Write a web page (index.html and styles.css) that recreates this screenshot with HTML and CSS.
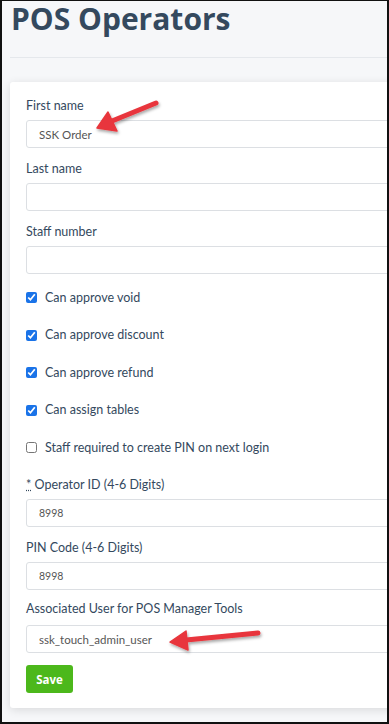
FILE: index.html
```html
<!DOCTYPE html>
<html>
<head>
<meta charset="utf-8">
<link rel="stylesheet" href="styles.css">
</head>
<body>
<div class="frame">
  <h1 class="title">POS Operators</h1>
  <div class="divider"></div>
  <div class="card">
    <div class="field">
      <label class="label">First name</label>
      <input class="input" type="text" value="SSK Order">
    </div>
    <div class="field">
      <label class="label">Last name</label>
      <input class="input" type="text" value="">
    </div>
    <div class="field">
      <label class="label">Staff number</label>
      <input class="input" type="text" value="">
    </div>
    <div class="checks">
      <label class="check"><input type="checkbox" checked><span>Can approve void</span></label>
      <label class="check"><input type="checkbox" checked><span>Can approve discount</span></label>
      <label class="check"><input type="checkbox" checked><span>Can approve refund</span></label>
      <label class="check"><input type="checkbox" checked><span>Can assign tables</span></label>
      <label class="check"><input type="checkbox"><span>Staff required to create PIN on next login</span></label>
    </div>
    <div class="field">
      <label class="label"><abbr class="req" title="required">*</abbr> Operator ID (4-6 Digits)</label>
      <input class="input small" type="text" value="8998">
    </div>
    <div class="field">
      <label class="label">PIN Code (4-6 Digits)</label>
      <input class="input small" type="text" value="8998">
    </div>
    <div class="field assoc">
      <label class="label">Associated User for POS Manager Tools</label>
      <input class="input" type="text" value="ssk_touch_admin_user">
    </div>
    <button class="save" type="button">Save</button>
  </div>
  <svg class="arrows" width="389" height="724" viewBox="0 0 389 724">
    <defs>
      <filter id="sh" x="-20%" y="-20%" width="140%" height="140%">
        <feDropShadow dx="1" dy="2" stdDeviation="1.5" flood-color="#000" flood-opacity="0.35"/>
      </filter>
    </defs>
    <g filter="url(#sh)" fill="#e8363c" stroke="#e8363c" stroke-linecap="round" stroke-linejoin="round">
      <line x1="156" y1="103" x2="112" y2="121" stroke-width="5"/>
      <polygon points="97,128 108,112 117,131" stroke-width="1.5"/>
      <line x1="258" y1="633" x2="186" y2="640" stroke-width="5"/>
      <polygon points="170,642 186,631 188,650" stroke-width="1.5"/>
    </g>
  </svg>
</div>
</body>
</html>
```
FILE: styles.css
```css
* { box-sizing: border-box; }
html, body { margin: 0; padding: 0; }
body { background: #f6f7f9; }
.frame {
  position: relative;
  width: 389px;
  height: 724px;
  overflow: hidden;
  background: #f6f7f9;
  border-top: 1px solid #111;
  border-left: 2px solid #111;
  border-right: 2px solid #111;
  border-bottom: 2px solid #111;
  font-family: "Lato", "Liberation Sans", sans-serif;
  color: #34495e;
}
.title {
  margin: 0 0 0 9px;
  font-family: "Open Sans", sans-serif;
  font-weight: 700;
  font-size: 30px;
  line-height: 36px;
  color: #34495e;
}
.divider {
  margin: 20px 0 0 8px;
  height: 1px;
  background: #e5e8ec;
}
.card {
  margin: 24px 0 0 8px;
  width: 420px;
  background: #fff;
  border-radius: 3px;
  box-shadow: 0 2px 10px rgba(0,0,0,0.12);
  padding: 16px 0 15px 16px;
}
.field { display: flex; flex-direction: column; margin-bottom: 13px; }
.label {
  font-size: 12.5px;
  line-height: 16px;
  margin-bottom: 6px;
  color: #34495e;
}
.field.assoc { margin-top: -2px; }
.field.assoc .label { margin-bottom: 8px; }
.req { text-decoration: underline dotted; cursor: help; }
.input {
  height: 28px;
  width: 100%;
  border: 1px solid #dcdfe3;
  border-radius: 3px;
  padding: 0 12px;
  font-family: "Lato", sans-serif;
  font-size: 11.5px;
  color: #555;
  background: #fff;
  outline: none;
}
.input.small { font-size: 10.5px; }
.checks { display: flex; flex-direction: column; gap: 21.5px; margin: 15.5px 0 21.5px; }
.check {
  display: flex;
  align-items: center;
  gap: 8px;
  font-size: 12.5px;
  line-height: 16px;
  color: #34495e;
}
.check input { margin: 0; width: 11px; height: 11px; accent-color: #1a73e8; }
.save {
  display: block;
  margin-top: -1px;
  height: 28px;
  width: 47px;
  border: none;
  border-radius: 3px;
  background: #4cb81b;
  color: #fff;
  font-family: "Open Sans", sans-serif;
  font-weight: 700;
  font-size: 11.5px;
  padding: 0;
}
.arrows { position: absolute; left: -2px; top: -1px; pointer-events: none; }
```
